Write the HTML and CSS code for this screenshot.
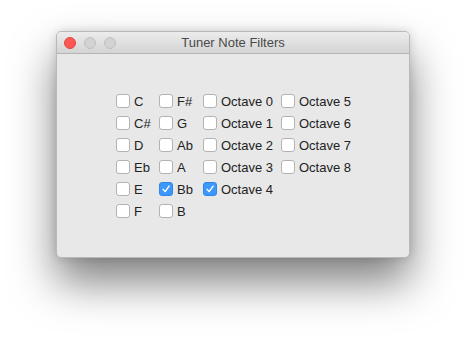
FILE: index.html
```html
<!DOCTYPE html>
<html lang="en">
<head>
  <meta charset="UTF-8" />
  <title>Tuner Note Filters</title>
  <link rel="stylesheet" href="styles.css">
</head>
<body>
  <div class="window">
    <!-- Title bar -->
    <div class="titlebar">
      <div class="lights">
        <span class="light close"></span>
        <span class="light"></span>
        <span class="light"></span>
      </div>
      <div class="title">Tuner Note Filters</div>
    </div>

    <!-- Filters -->
    <div class="content">
      <div class="filters">
        <div class="col col-note">
          <label class="check"><span class="box"></span>C</label>
          <label class="check"><span class="box"></span>C#</label>
          <label class="check"><span class="box"></span>D</label>
          <label class="check"><span class="box"></span>Eb</label>
          <label class="check"><span class="box"></span>E</label>
          <label class="check"><span class="box"></span>F</label>
        </div>
        <div class="col col-note2">
          <label class="check"><span class="box"></span>F#</label>
          <label class="check"><span class="box"></span>G</label>
          <label class="check"><span class="box"></span>Ab</label>
          <label class="check"><span class="box"></span>A</label>
          <label class="check"><span class="box checked"><svg viewBox="0 0 14 14"><path d="M3.6 7.4 L6 10 L10.6 3.6" /></svg></span>Bb</label>
          <label class="check"><span class="box"></span>B</label>
        </div>
        <div class="col col-oct">
          <label class="check"><span class="box"></span>Octave 0</label>
          <label class="check"><span class="box"></span>Octave 1</label>
          <label class="check"><span class="box"></span>Octave 2</label>
          <label class="check"><span class="box"></span>Octave 3</label>
          <label class="check"><span class="box checked"><svg viewBox="0 0 14 14"><path d="M3.6 7.4 L6 10 L10.6 3.6" /></svg></span>Octave 4</label>
        </div>
        <div class="col">
          <label class="check"><span class="box"></span>Octave 5</label>
          <label class="check"><span class="box"></span>Octave 6</label>
          <label class="check"><span class="box"></span>Octave 7</label>
          <label class="check"><span class="box"></span>Octave 8</label>
        </div>
      </div>
    </div>
  </div>
</body>
</html>
```

FILE: styles.css
```css
* {
  margin: 0;
  padding: 0;
  box-sizing: border-box;
}
html, body {
  min-height: 100vh;
}
body {
  background: #fff;
  font-family: "Liberation Sans", Arial, sans-serif;
  font-size: 13px;
  color: #222;
  padding: 31px 0 0 56px;
}
/* Window */
.window {
  width: 354px;
  height: 227px;
  border-radius: 5px;
  background: #e8e8e8;
  border: 1px solid #b9b9b9;
  box-shadow: 0 24px 44px rgba(0,0,0,0.5), 0 0 10px rgba(0,0,0,0.14);
  overflow: hidden;
  display: flex;
  flex-direction: column;
}
/* Title bar */
.titlebar {
  height: 22px;
  background: linear-gradient(#ececec, #d4d4d4);
  border-bottom: 1px solid #b4b4b4;
  display: flex;
  align-items: center;
  position: relative;
  flex-shrink: 0;
}
.lights {
  display: flex;
  gap: 8px;
  padding-left: 7px;
}
.light {
  width: 12px;
  height: 12px;
  border-radius: 50%;
  background: #d3d3d3;
  border: 1px solid #c0c0c0;
}
.light.close {
  background: #fc5753;
  border-color: #df4744;
}
.title {
  position: absolute;
  left: 0;
  right: 0;
  text-align: center;
  color: #4a4a4a;
  font-size: 13px;
}
/* Content */
.content {
  flex: 1;
  padding: 36px 0 0 59px;
}
.filters {
  display: flex;
}
.col {
  display: flex;
  flex-direction: column;
}
.col-note { width: 43px; }
.col-note2 { width: 44px; }
.col-oct { width: 78px; }
.check {
  height: 22px;
  display: flex;
  align-items: center;
  gap: 4px;
  white-space: nowrap;
}
.box {
  width: 14px;
  height: 14px;
  border-radius: 3px;
  background: #fff;
  border: 1px solid #b3b3b3;
  flex-shrink: 0;
  display: flex;
}
.box.checked {
  background: #3d98fb;
  border-color: #2f86ea;
}
.box svg {
  width: 100%;
  height: 100%;
  fill: none;
  stroke: #fff;
  stroke-width: 1.6;
  stroke-linecap: round;
  stroke-linejoin: round;
}
```
